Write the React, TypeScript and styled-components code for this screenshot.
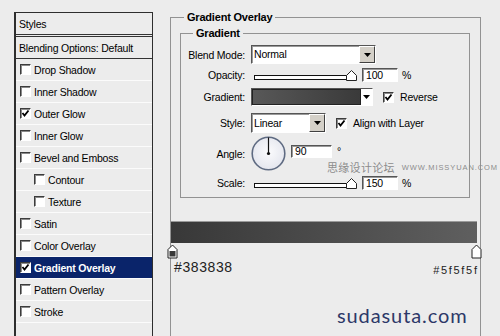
import styled, { createGlobalStyle } from "styled-components";

const GlobalStyle = createGlobalStyle`
  html, body {
    margin: 0;
    padding: 0;
    background: #ececec;
    overflow: hidden;
  }
  body {
    font-family: "Liberation Sans", Arial, sans-serif;
    font-size: 10.5px;
    letter-spacing: -0.2px;
    color: #000;
  }
`;

const Screen = styled.div`
  position: relative;
  width: 500px;
  height: 336px;
  display: flex;
  align-items: flex-start;
  overflow: hidden;
`;

/* ---------- left list ---------- */

const StyleList = styled.div`
  flex: none;
  box-sizing: border-box;
  width: 139px;
  height: 340px;
  margin: 12px 0 0 14px;
  border: 1px solid #2e2e2e;
  border-left-width: 2px;
  display: flex;
  flex-direction: column;
`;

const ListHeader = styled.div`
  height: 21px;
  display: flex;
  align-items: center;
  padding-left: 3px;
  border-bottom: 3px double #333;
`;

const BlendRow = styled.div`
  height: 21px;
  display: flex;
  align-items: center;
  padding-left: 3px;
  border-bottom: 1px solid #333;
`;

const Item = styled.div<{ $indent?: boolean; $active?: boolean }>`
  height: 21px;
  display: flex;
  align-items: center;
  gap: 3px;
  padding-left: ${(p) => (p.$indent ? 18 : 4)}px;
  border-bottom: 1px solid #fbfbfb;
  background: ${(p) => (p.$active ? "#0a246a" : "transparent")};
  color: ${(p) => (p.$active ? "#fff" : "#000")};
  font-weight: ${(p) => (p.$active ? "bold" : "normal")};
`;

const Box = styled.span`
  flex: none;
  box-sizing: border-box;
  width: 11px;
  height: 11px;
  background: #fff;
  border: 1px solid;
  border-color: #3c3c3c #fff #fff #3c3c3c;
  box-shadow: inset 1px 1px 0 #8a8a8a;
  display: flex;
  align-items: center;
  justify-content: center;
`;

function Check({ on }: { on?: boolean }) {
  return (
    <Box>
      {on && (
        <svg width="9" height="9" viewBox="0 0 9 9">
          <polyline points="1.5,4 3.5,6.5 7.5,1.5" fill="none" stroke="#000" strokeWidth="1.8" />
        </svg>
      )}
    </Box>
  );
}

/* ---------- right panel ---------- */

const Group = styled.fieldset`
  flex: none;
  box-sizing: border-box;
  width: 311px;
  margin: 10px 0 0 17px;
  padding: 2px 11px 0 9px;
  border: 1px solid #929292;
  min-width: 0;
  height: 360px;
`;

const Inner = styled.fieldset`
  box-sizing: border-box;
  width: 290px;
  margin: 0;
  padding: 5px 0 7px 0;
  border: 1px solid #929292;
  min-width: 0;
  display: flex;
  flex-direction: column;
`;

const Legend = styled.legend<{ $offset: number }>`
  font-weight: bold;
  font-size: 11px;
  line-height: 14px;
  padding: 0 3px;
  margin-left: ${(p) => p.$offset}px;
`;

const Row = styled.div<{ $top?: number }>`
  display: flex;
  align-items: center;
  margin-top: ${(p) => p.$top ?? 0}px;
`;

const Label = styled.span`
  flex: none;
  width: 64px;
  margin-right: 6px;
  text-align: right;
`;

const Field = styled.div<{ $w: number; $h: number }>`
  flex: none;
  box-sizing: border-box;
  width: ${(p) => p.$w}px;
  height: ${(p) => p.$h}px;
  background: #fff;
  border: 1px solid;
  border-color: #555 #fff #fff #555;
  box-shadow: inset 1px 1px 0 #9a9a9a;
  display: flex;
  align-items: center;
  padding-left: 3px;
  line-height: 1;
`;

const SelectBox = styled(Field)`
  padding-left: 2px;
  padding-right: 0;
  justify-content: space-between;
`;

const DropButton = styled.span`
  box-sizing: border-box;
  width: 16px;
  height: 100%;
  background: #d4d0c8;
  border: 1px solid;
  border-color: #fff #404040 #404040 #fff;
  display: flex;
  align-items: center;
  justify-content: center;
`;

function Arrow() {
  return (
    <svg width="7" height="4" viewBox="0 0 7 4">
      <polygon points="0,0 7,0 3.5,4" fill="#000" />
    </svg>
  );
}

const Slider = styled.div`
  flex: none;
  width: 103px;
  height: 12px;
  margin-left: 3px;
  position: relative;
  display: flex;
  align-items: flex-end;
`;

const Track = styled.div`
  box-sizing: border-box;
  width: 96px;
  height: 5px;
  margin-bottom: 1px;
  background: #fff;
  border: 1px solid #111;
`;

const Thumb = styled.svg`
  position: absolute;
  right: 0;
  bottom: 0;
`;

function SliderBar() {
  return (
    <Slider>
      <Track />
      <Thumb width="11" height="11" viewBox="0 0 11 11">
        <polygon points="0.5,10.5 0.5,5.5 5.5,0.5 10.5,5.5 10.5,10.5" fill="#fff" stroke="#222" />
      </Thumb>
    </Slider>
  );
}

const Unit = styled.span`
  margin-left: 4px;
`;

const GradientPick = styled.div`
  flex: none;
  box-sizing: border-box;
  width: 122px;
  height: 18px;
  display: flex;
  border: 1px solid;
  border-color: #555 #fff #fff #555;
`;

const Swatch = styled.div`
  flex: 1;
  background: linear-gradient(to right, #585858, #3a3a3a);
  border: 1px solid #222;
`;

const PickArrow = styled.div`
  width: 11px;
  background: #fff;
  display: flex;
  align-items: center;
  justify-content: center;
`;

const Option = styled.label<{ $left: number }>`
  display: flex;
  align-items: center;
  gap: 6px;
  margin-left: ${(p) => p.$left}px;
`;

const Dial = styled.svg`
  flex: none;
  margin-right: 5px;
`;

const Degree = styled.span`
  margin-left: 5px;
  margin-top: -6px;
`;

const Ramp = styled.div`
  height: 21px;
  margin: 23px 0 0 -9px;
  width: 306px;
  border-top: 1px solid #9a9a9a;
  background: linear-gradient(to right, #383838, #5f5f5f);
`;

const StopRow = styled.div`
  display: flex;
  justify-content: space-between;
  margin: 1px -13px 0 -13px;
`;

function Stop({ fill }: { fill: string }) {
  return (
    <svg width="11" height="15" viewBox="0 0 11 15">
      <polygon points="1,14 1,5.5 5.5,1 10,5.5 10,14" fill="#fff" stroke="#222" />
      {fill !== "#fff" && <rect x="2.5" y="7" width="6" height="5.5" fill={fill} />}
    </svg>
  );
}

const HexRow = styled.div`
  display: flex;
  justify-content: space-between;
  align-items: flex-end;
  margin: 0 -8px 0 -6px;
  color: #222;
  font-family: "Liberation Sans", Arial, sans-serif;
`;

const HexLeft = styled.span`
  font-size: 14px;
  letter-spacing: 0.6px;
`;

const HexRight = styled.span`
  font-size: 11px;
  letter-spacing: 1.7px;
  margin-right: -1.7px;
  margin-bottom: -1px;
`;

const Watermark = styled.div`
  position: absolute;
  left: 327px;
  top: 159px;
  display: flex;
  align-items: center;
  gap: 7px;
  color: #8c8c8c;
  letter-spacing: 0;
`;

const WmCn = styled.span`
  font-family: "Noto Sans CJK SC", sans-serif;
  font-size: 11px;
  letter-spacing: 0.3px;
`;

const WmEn = styled.span`
  font-family: "Liberation Sans", Arial, sans-serif;
  font-size: 7.5px;
  letter-spacing: 0.9px;
`;

const Brand = styled.div`
  position: absolute;
  left: 337px;
  top: 303px;
  font-family: Lato, "Noto Sans", sans-serif;
  font-size: 20px;
  letter-spacing: 0.9px;
  color: #2d3868;
`;

const items: { name: string; indent?: boolean; on?: boolean; active?: boolean }[] = [
  { name: "Drop Shadow" },
  { name: "Inner Shadow" },
  { name: "Outer Glow", on: true },
  { name: "Inner Glow" },
  { name: "Bevel and Emboss" },
  { name: "Contour", indent: true },
  { name: "Texture", indent: true },
  { name: "Satin" },
  { name: "Color Overlay" },
  { name: "Gradient Overlay", on: true, active: true },
  { name: "Pattern Overlay" },
  { name: "Stroke" },
];

export default function App() {
  return (
    <Screen>
      <GlobalStyle />
      <StyleList>
        <ListHeader>Styles</ListHeader>
        <BlendRow>Blending Options: Default</BlendRow>
        {items.map((it) => (
          <Item key={it.name} $indent={it.indent} $active={it.active}>
            <Check on={it.on} />
            {it.name}
          </Item>
        ))}
      </StyleList>

      <Group>
        <Legend $offset={4}>Gradient Overlay</Legend>
        <Inner>
          <Legend $offset={12}>Gradient</Legend>
          <Row>
            <Label>Blend Mode:</Label>
            <SelectBox $w={125} $h={19}>
              Normal
              <DropButton>
                <Arrow />
              </DropButton>
            </SelectBox>
          </Row>
          <Row $top={4}>
            <Label>Opacity:</Label>
            <SliderBar />
            <Field $w={36} $h={14} style={{ marginLeft: 5 }}>
              100
            </Field>
            <Unit>%</Unit>
          </Row>
          <Row $top={6}>
            <Label>Gradient:</Label>
            <GradientPick>
              <Swatch />
              <PickArrow>
                <Arrow />
              </PickArrow>
            </GradientPick>
            <Option $left={10}>
              <Check on />
              Reverse
            </Option>
          </Row>
          <Row $top={7}>
            <Label>Style:</Label>
            <SelectBox $w={75} $h={20}>
              Linear
              <DropButton>
                <Arrow />
              </DropButton>
            </SelectBox>
            <Option $left={10}>
              <Check on />
              Align with Layer
            </Option>
          </Row>
          <Row $top={3}>
            <Label>Angle:</Label>
            <Dial width="35" height="35" viewBox="0 0 35 35">
              <defs>
                <radialGradient id="dialFill" cx="50%" cy="45%" r="55%">
                  <stop offset="0%" stopColor="#fbfbfd" />
                  <stop offset="100%" stopColor="#e4e6ee" />
                </radialGradient>
              </defs>
              <circle cx="17.5" cy="17.5" r="16.3" fill="url(#dialFill)" stroke="#5f6b82" strokeWidth="1.6" />
              <line x1="17.5" y1="17.5" x2="17.5" y2="1.5" stroke="#111" strokeWidth="1.2" />
              <circle cx="17.5" cy="17.5" r="1.6" fill="#111" />
            </Dial>
            <Field $w={41} $h={13} style={{ marginTop: -4 }}>
              90
            </Field>
            <Degree>°</Degree>
          </Row>
          <Row $top={5}>
            <Label>Scale:</Label>
            <SliderBar />
            <Field $w={36} $h={14} style={{ marginLeft: 5 }}>
              150
            </Field>
            <Unit>%</Unit>
          </Row>
        </Inner>
        <Ramp />
        <StopRow>
          <Stop fill="#383838" />
          <Stop fill="#fff" />
        </StopRow>
        <HexRow>
          <HexLeft>#383838</HexLeft>
          <HexRight>#5f5f5f</HexRight>
        </HexRow>
      </Group>

      <Watermark>
        <WmCn>思缘设计论坛</WmCn>
        <WmEn>WWW.MISSYUAN.COM</WmEn>
      </Watermark>
      <Brand>sudasuta.com</Brand>
    </Screen>
  );
}
